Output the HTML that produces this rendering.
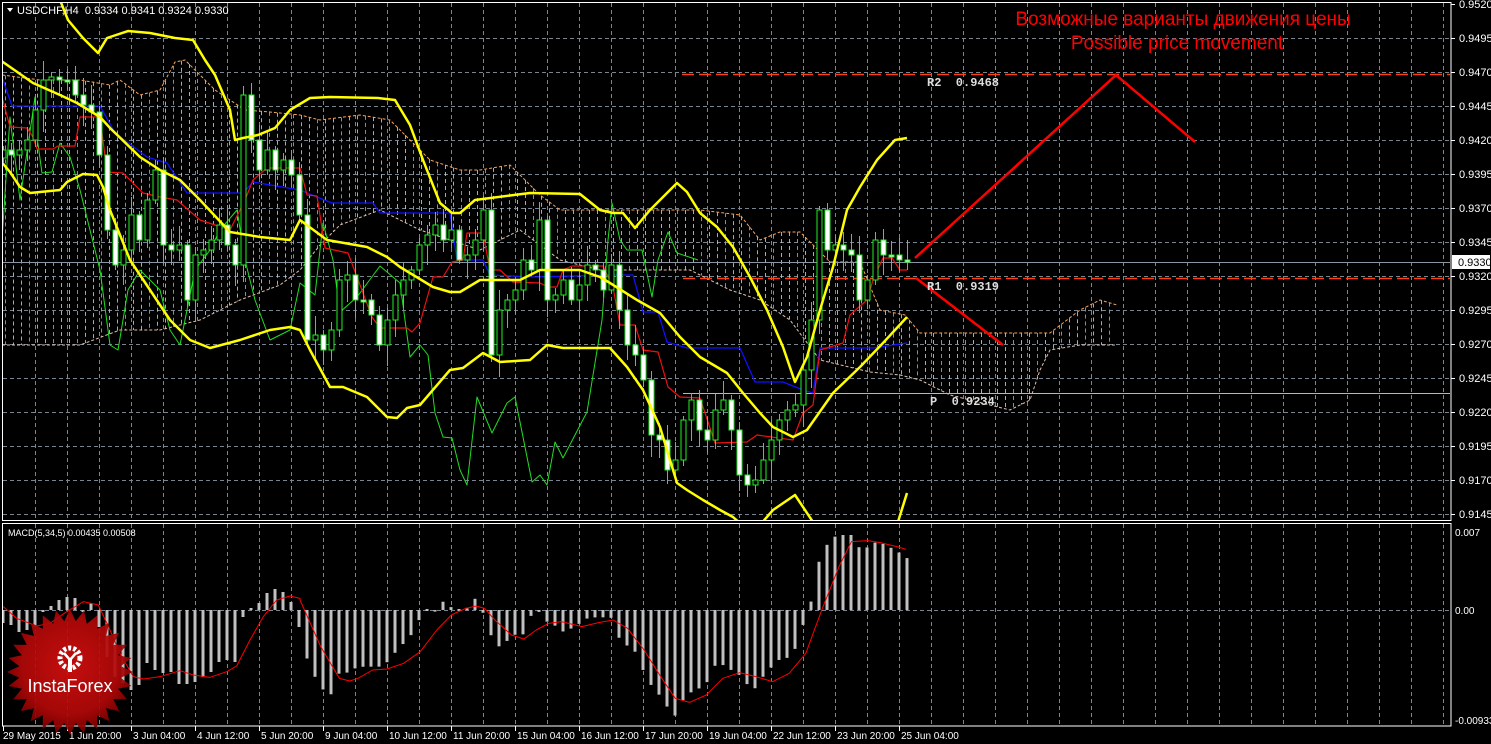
<!DOCTYPE html>
<html><head><meta charset="utf-8"><style>
html,body{margin:0;padding:0;background:#000;width:1491px;height:744px;overflow:hidden}
svg{display:block}
text{font-family:"Liberation Sans","DejaVu Sans",sans-serif}
text.m{font-family:"Liberation Mono",monospace;font-weight:bold;white-space:pre}
</style></head><body>
<svg id="s" width="1491" height="744" viewBox="0 0 1491 744" xmlns="http://www.w3.org/2000/svg">
<defs>
<radialGradient id="lg" cx="50%" cy="45%" r="55%">
<stop offset="0" stop-color="#d40f0f"/><stop offset="0.7" stop-color="#b00808"/><stop offset="1" stop-color="#7a0000"/>
</radialGradient>
<clipPath id="mc"><rect x="2" y="2" width="1449" height="518"/></clipPath>
<clipPath id="dc"><rect x="2" y="524" width="1449" height="202"/></clipPath>
</defs>
<g id="grid"></g>
<g id="cloud" clip-path="url(#mc)"></g>
<g id="main" clip-path="url(#mc)"></g>
<g id="macd" clip-path="url(#dc)"></g>
<rect x="2.5" y="2.5" width="1448.5" height="518" fill="none" stroke="#fff" stroke-width="1"/>
<rect x="2.5" y="523.5" width="1448.5" height="202.5" fill="none" stroke="#fff" stroke-width="1"/>
<g id="labels" font-size="11" fill="#fff"></g>
<polygon points="7,8 13,8 10,12" fill="#fff"/>
<text x="17" y="14" font-size="11" fill="#fff" style="white-space:pre">USDCHF,H4  0.9334 0.9341 0.9324 0.9330</text>
<text x="8" y="536" font-size="9" fill="#fff">MACD(5,34,5) 0.00435 0.00508</text>
<text x="1183" y="25" font-size="19" fill="#ff0000" text-anchor="middle">Возможные варианты движения цены</text>
<text x="1177" y="49" font-size="19" fill="#ff0000" text-anchor="middle">Possible price movement</text>
<text class="m" x="927" y="86" font-size="12" fill="#ddd">R2  0.9468</text>
<text class="m" x="927" y="290" font-size="12" fill="#ddd">R1  0.9319</text>
<text class="m" x="930" y="405" font-size="12" fill="#ddd">P  0.9234</text>
<g id="logo" opacity="0.93"></g>
<g id="logofg">
<text x="70" y="692" font-size="18" fill="#fff" text-anchor="middle">InstaForex</text>
<g fill="#fff">
<circle cx="70" cy="658" r="10" fill="none" stroke="#fff" stroke-width="5" stroke-dasharray="3 2"/>
<circle cx="70" cy="658" r="6" fill="#b80a0a"/>
<rect x="68" y="658" width="4" height="14"/>
<path d="M64,653 L70,660 L76,653" fill="none" stroke="#fff" stroke-width="2.5"/>
</g>
</g>
</svg>
<script>
(function(){
var NS="http://www.w3.org/2000/svg";
function el(p,t,a){var e=document.createElementNS(NS,t);for(var k in a)e.setAttribute(k,a[k]);p.appendChild(e);return e;}
function G(i){return document.getElementById(i);}
function interp(pts,x){if(x<=pts[0][0])return pts[0][1];for(var i=1;i<pts.length;i++){if(x<=pts[i][0]){var a=pts[i-1],b=pts[i];return a[1]+(b[1]-a[1])*(x-a[0])/(b[0]-a[0]);}}return pts[pts.length-1][1];}
function pl(p,pts,c,w,extra){var s=pts.map(function(q){return q[0]+","+q[1]}).join(" ");var a={points:s,fill:"none",stroke:c,"stroke-width":w,"stroke-linejoin":"round"};if(extra)for(var k in extra)a[k]=extra[k];return el(p,"polyline",a);}
var g=G("grid");
for(var y=38;y<=514;y+=34) el(g,"line",{x1:3,x2:1450,y1:y+.5,y2:y+.5,stroke:"#7a8592","stroke-dasharray":"4 3","stroke-width":1});
for(var x=35;x<1450;x+=32){el(g,"line",{x1:x+.5,x2:x+.5,y1:3,y2:520,stroke:"#7a8592","stroke-dasharray":"4 3"});el(g,"line",{x1:x+.5,x2:x+.5,y1:524,y2:725,stroke:"#7a8592","stroke-dasharray":"4 3"});}
el(g,"line",{x1:3,x2:1450,y1:610.5,y2:610.5,stroke:"#7a8592","stroke-dasharray":"4 3"});
var L=G("labels");
var pr=["0.9520","0.9495","0.9470","0.9445","0.9420","0.9395","0.9370","0.9345","0.9320","0.9295","0.9270","0.9245","0.9220","0.9195","0.9170","0.9145"];
for(var i=0;i<pr.length;i++){var yy=4+34*i;el(L,"line",{x1:1451,x2:1455,y1:yy+.5,y2:yy+.5,stroke:"#fff"});var t=el(L,"text",{x:1459,y:yy+4});t.textContent=pr[i];}
[["0.007",532],["0.00",610],["-0.00933",720]].forEach(function(a){var t=el(L,"text",{x:1455,y:a[1]+4,"font-size":10});t.textContent=a[0];});
el(L,"rect",{x:1452,y:255,width:38,height:14,fill:"#fff"});
var t=el(L,"text",{x:1458,y:266,fill:"#000"});t.textContent="0.9330";
var tl=["29 May 2015","1 Jun 20:00","3 Jun 04:00","4 Jun 12:00","5 Jun 20:00","9 Jun 04:00","10 Jun 12:00","11 Jun 20:00","15 Jun 04:00","16 Jun 12:00","17 Jun 20:00","19 Jun 04:00","22 Jun 12:00","23 Jun 20:00","25 Jun 04:00"];
for(var i=0;i<tl.length;i++){var xx=3+64*i;el(L,"line",{x1:xx+.5,x2:xx+.5,y1:726,y2:731,stroke:"#fff"});var t2=el(L,"text",{x:xx+(i==0?0:2),y:739,"font-size":10});t2.textContent=tl[i];}
var ctop=[[2,75],[40,80],[80,80],[110,85],[120,80],[140,95],[160,90],[175,62],[185,60],[200,75],[215,90],[245,110],[270,112],[300,115],[320,120],[360,115],[390,120],[410,140],[430,160],[460,170],[480,170],[510,165],[530,185],[540,195],[560,210],[600,210],[650,210],[700,210],[740,215],[760,240],[780,232],[800,232],[830,262],[860,262],[880,310],[905,315],[920,333],[1000,333],[1050,333],[1080,310],[1100,300],[1117,305]];
var cbot=[[2,345],[40,345],[80,345],[120,330],[160,330],[200,320],[240,300],[280,285],[300,270],[320,245],[340,225],[380,210],[400,220],[420,230],[450,240],[480,250],[500,240],[520,230],[560,260],[600,270],[650,270],[690,270],[710,280],[730,290],[760,300],[790,320],[820,360],[870,372],[900,375],[920,380],[950,395],[990,405],[1010,410],[1030,400],[1040,370],[1050,350],[1080,345],[1117,345]];
var C=G("cloud");
for(var x=5;x<=1116;x+=8){var a=interp(ctop,x),b=interp(cbot,x);el(C,"line",{x1:x+.5,x2:x+.5,y1:a,y2:b,stroke:(x%24==5?"#d89870":"#c8c8c8"),"stroke-dasharray":"4 3","stroke-width":1,opacity:0.85});}
pl(C,ctop,"#f4a460",1,{"stroke-dasharray":"3 2"});
pl(C,cbot,"#e0c0b0",1,{"stroke-dasharray":"3 2"});
var M=G("main");
el(M,"line",{x1:3,x2:1450,y1:262.5,y2:262.5,stroke:"#8a96a3"});
el(M,"line",{x1:683,x2:1450,y1:393.5,y2:393.5,stroke:"#f0c000"});
el(M,"line",{x1:682,x2:1450,y1:74.5,y2:74.5,stroke:"#ff4010","stroke-width":1.5,"stroke-dasharray":"12 5"});
el(M,"line",{x1:683,x2:1450,y1:278.5,y2:278.5,stroke:"#ff4010","stroke-width":1.5,"stroke-dasharray":"12 5"});
pl(M,[[2,240],[10,117],[20,200],[35,97],[37,137],[42,173],[52,172],[60,143],[70,157],[80,190],[90,230],[100,270],[110,345],[118,350],[128,290],[140,270],[160,290],[170,330],[180,345],[195,270],[210,250],[220,230],[237,210],[245,260],[255,300],[270,340],[290,330],[300,283],[315,295],[323,223],[333,260],[340,312],[357,297],[380,266],[400,283],[410,357],[420,345],[428,355],[435,413],[443,437],[452,438],[460,470],[467,485],[477,397],[492,433],[507,403],[515,397],[532,482],[540,475],[547,485],[555,442],[563,458],[587,412],[602,320],[608,240],[612,203],[620,240],[627,250],[642,250],[652,297],[658,260],[668,232],[677,253],[698,260]],"#22dd22",1);
pl(M,[[2,77],[12,106],[100,106],[115,133],[147,157],[167,163],[183,187],[187,193],[243,193],[253,182],[300,190],[317,197],[332,203],[373,203],[380,213],[450,213],[457,260],[483,260],[490,275],[533,277],[613,275],[633,275],[643,312],[658,312],[667,342],[687,348],[740,348],[755,382],[783,382],[803,390],[813,393],[820,348],[873,348],[907,343]],"#1010ff",1.3);
pl(M,[[2,97],[10,127],[27,128],[33,137],[37,149],[53,149],[58,146],[75,146],[80,117],[100,117],[107,172],[123,173],[143,193],[160,197],[177,200],[200,220],[230,230],[245,200],[253,180],[267,168],[300,168],[307,195],[317,196],[325,248],[348,253],[372,317],[380,328],[407,328],[412,332],[420,323],[433,277],[443,277],[452,262],[463,260],[467,233],[483,233],[490,270],[500,270],[513,282],[540,283],[548,287],[557,287],[563,270],[572,266],[603,266],[613,287],[620,325],[635,325],[643,350],[658,352],[668,387],[680,397],[700,398],[715,443],[747,442],[757,435],[793,440],[803,413],[813,405],[820,350],[843,343],[850,315],[867,300],[873,280],[883,258],[892,258],[900,270],[907,270]],"#ee1010",1.2);
var cy=[150,155,150,140,110,80,77,80,80,95,105,112,155,230,265,250,215,240,200,170,245,250,245,300,255,250,240,225,245,265,95,140,170,150,170,160,175,215,340,335,350,330,280,275,300,300,315,345,320,295,280,270,245,235,225,240,230,260,255,240,210,355,310,300,290,260,270,220,300,295,280,300,285,265,270,290,265,310,345,355,380,435,440,470,460,420,400,430,440,410,400,430,475,485,480,460,440,420,410,405,370,320,210,250,245,250,255,300,280,240,255,255,260,262];
for(var i=0;i<cy.length;i++){var x=3+8*i;var c=cy[i],o=(i==0?c+8:cy[i-1]);var hi=Math.min(o,c)-(4+(i*37)%17),lw=Math.max(o,c)+(4+(i*53)%19);
el(M,"line",{x1:x+.5,x2:x+.5,y1:hi,y2:lw,stroke:"#22ee22"});
var bt=Math.min(o,c),bh=Math.max(2,Math.abs(o-c));
el(M,"rect",{x:x-2,y:bt,width:5,height:bh,fill:(c<o?"#000":"#fff"),stroke:"#22ee22","stroke-width":1});}
var up=[[60,0],[68,20],[83,38],[98,53],[107,38],[128,31],[150,33],[175,38],[193,40],[205,60],[215,75],[230,110],[235,140],[243,138],[258,135],[275,128],[290,110],[310,98],[330,97],[378,98],[395,100],[410,125],[423,160],[440,203],[452,213],[460,213],[475,200],[530,193],[580,194],[600,210],[613,213],[623,213],[635,228],[650,210],[677,183],[687,192],[700,213],[717,227],[733,247],[750,277],[767,310],[783,347],[795,382],[807,357],[820,310],[833,267],[847,210],[860,187],[877,160],[895,140],[907,138]];
var mid=[[0,60],[33,83],[60,95],[77,103],[100,117],[110,128],[140,157],[160,170],[180,180],[200,200],[230,232],[260,237],[290,240],[300,220],[327,240],[367,247],[387,257],[400,267],[433,287],[450,292],[460,292],[480,280],[520,280],[540,270],[580,270],[600,277],[610,283],[637,300],[660,313],[680,337],[700,357],[727,373],[743,393],[760,413],[773,427],[793,437],[807,430],[833,393],[860,367],[883,343],[907,317]];
var low=[[0,160],[10,172],[20,187],[30,193],[60,190],[67,182],[83,174],[97,175],[103,187],[110,210],[130,260],[150,290],[170,320],[190,340],[210,348],[240,340],[270,330],[290,327],[300,330],[310,350],[330,387],[343,387],[367,397],[387,417],[397,418],[407,408],[420,405],[450,370],[463,368],[483,353],[500,362],[530,360],[547,345],[563,348],[610,348],[627,367],[643,390],[660,427],[677,483],[687,490],[703,500],[720,510],[733,517],[742,525]];
pl(M,up,"#ffff00",2.5);pl(M,mid,"#ffff00",2.5);pl(M,low,"#ffff00",2.5);
pl(M,[[760,525],[773,510],[795,495],[813,522]],"#ffff00",2.5);
pl(M,[[897,525],[907,493]],"#ffff00",2.5);
pl(M,[[915,258],[1116,75],[1195,142]],"#ff0000",2.5);
pl(M,[[916,278],[1003,345]],"#ff0000",2.5);
var D=G("macd");
var hp=[[3,623],[11,625],[19,632],[27,630],[35,627],[43,612],[51,606],[59,600],[67,597],[75,598],[83,612],[91,603],[99,627],[107,657],[115,677],[123,683],[131,690],[139,685],[147,663],[155,670],[163,673],[171,672],[179,684],[187,684],[195,682],[203,677],[211,672],[219,662],[227,660],[235,662],[243,617],[251,608],[259,603],[267,593],[275,589],[283,592],[291,602],[299,627]];
var z6=[[15,410],[35,468],[55,508],[75,523],[95,458],[113,458],[133,445],[153,440],[173,440],[192,440],[212,425],[230,397],[250,370],[268,345],[288,298],[307,272],[327,275],[345,245],[365,262],[385,268],[405,263],[423,235],[443,282],[463,354],[482,382],[500,362],[520,343],[540,343],[558,285],[578,275],[597,307],[617,318],[635,335],[655,325],[675,310],[693,295],[713,292],[733,292],[750,293],[770,355],[790,378],[810,397],[828,452],[848,498],[868,527],[887,563],[907,590],[925,537],[945,515],[963,505],[983,485],[1003,432],[1020,435],[1040,450],[1060,465],[1080,495],[1098,505],[1118,468],[1138,440],[1157,418],[1177,413],[1195,385],[1215,308],[1233,243],[1253,118],[1273,70],[1290,50],[1310,45],[1330,45],[1350,85],[1370,82],[1388,67],[1408,72],[1428,85],[1448,100],[1465,115]];
z6.forEach(function(p){hp.push([300+p[0]/2.412,520+p[1]/3]);});
for(var i=0;i<=113;i++){var x=3+8*i;var v=interp(hp,x);var a=Math.min(v,610),b=Math.max(v,610);if(b-a<1){a=609;b=611;}el(D,"rect",{x:x-1.5,y:a,width:3,height:b-a,fill:"#c0c0c0"});}
var sp=[[10,80],[50,115],[110,138],[150,130],[200,95],[250,65],[295,75],[330,150],[360,220],[400,290],[430,297],[480,290],[540,272],[580,285],[630,292],[680,275],[710,258],[750,180],[790,110],[830,60],[870,48],[900,55]].map(function(p){return[p[0]/3,580+p[1]/3];});
[[0,240],[50,380],[95,475],[120,483],[140,475],[175,450],[210,447],[250,430],[290,395],[330,330],[365,285],[400,265],[425,258],[445,265],[470,300],[510,345],[540,357],[570,330],[600,310],[630,305],[680,320],[720,308],[755,300],[790,325],[830,390],[870,470],[905,535],[940,547],[980,525],[1020,475],[1060,458],[1100,470],[1140,485],[1180,460],[1220,400],[1260,265],[1300,140],[1330,65],[1370,62],[1400,68],[1440,80],[1462,88]].forEach(function(p){sp.push([300+p[0]/2.412,520+p[1]/3]);});
pl(D,sp,"#ff0000",1);
var lg=G("logo"),pts=[];var n=28;for(var k=0;k<2*n;k++){var r=(k%2==0)?63:51;var an=k*Math.PI/n;pts.push((70+r*Math.cos(an)).toFixed(1)+","+(672+r*Math.sin(an)).toFixed(1));}
el(lg,"polygon",{points:pts.join(" "),fill:"url(#lg)"});
})();
</script>
</body></html>
